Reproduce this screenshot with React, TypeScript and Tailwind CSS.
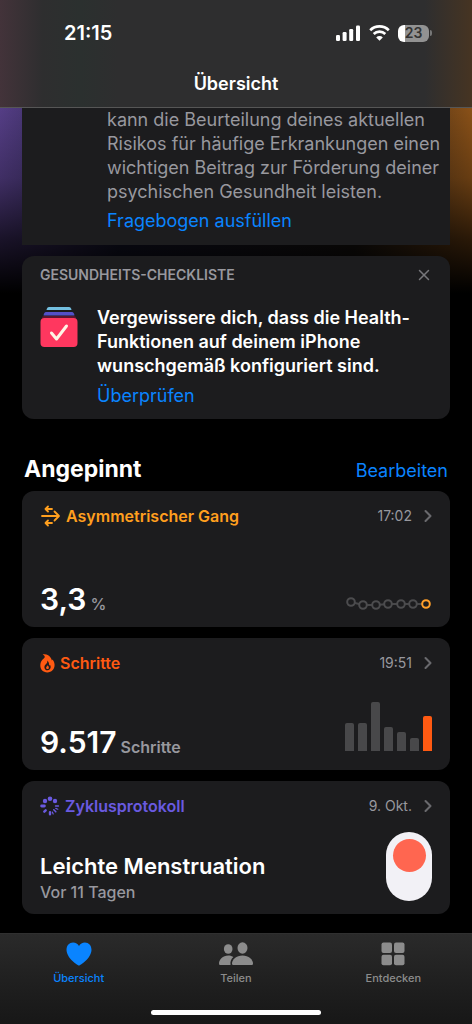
import React from "react";
import clsx from "clsx";
import { ChevronRight, X } from "lucide-react";

type Tab = {
  label: string;
  icon: React.ReactNode;
  active?: boolean;
};

/** Relative heights of the last seven days, in px */
const stepBars = [28, 28, 49, 24, 19, 13, 35];

/** Points of the gait trend line */
const gaitPoints = [
  [5, 7],
  [17, 10],
  [30, 10],
  [42, 9],
  [55, 9],
  [67, 9],
  [80, 9],
];

const SignalIcon = () => (
  <svg width="25" height="16" viewBox="0 0 25 16" fill="currentColor" aria-hidden="true">
    <rect x="0" y="10" width="4" height="6" rx="1.2" />
    <rect x="6.6" y="7" width="4" height="9" rx="1.2" />
    <rect x="13.2" y="4" width="4" height="12" rx="1.2" />
    <rect x="20" y="0.5" width="4" height="15.5" rx="1.2" />
  </svg>
);

const WifiIcon = () => (
  <svg width="21" height="16" viewBox="0 0 21 16" fill="none" stroke="currentColor" strokeWidth="2.7" aria-hidden="true">
    <path d="M1.200 5.200a13.400 13.400 0 0 1 18.600 0" />
    <path d="M4.700 9a8.400 8.400 0 0 1 11.600 0" />
    <path d="M10.500 15.800l-3.300-3.400a4.700 4.700 0 0 1 6.600 0z" fill="currentColor" stroke="none" />
  </svg>
);

const Battery = () => (
  <div className="flex items-center gap-px">
    <div className="flex h-[17px] w-[31px] items-center justify-center rounded-md bg-linear-to-r from-white from-24% to-[#929292] to-24% text-sm leading-none font-semibold text-[#333]">
      23
    </div>
    <div className="h-[6px] w-[2px] rounded-r-full bg-[#777]" />
  </div>
);

const ChecklistIcon = () => (
  <svg width="38" height="42" viewBox="0 0 38 42" fill="none" className="shrink-0" aria-hidden="true">
    <path d="M9 1h20q2 0 2.500 3h-25Q7 1 9 1z" fill="#73bfe0" />
    <path d="M6 6h26q2 0 2.500 3.500h-31Q4 6 6 6z" fill="#5450c8" />
    <rect x="2" y="10" width="34" height="4" rx="2" fill="#5c1630" />
    <rect x="0.5" y="12" width="37" height="29" rx="4" fill="#ff375f" />
    <path d="M11.500 27l5 6L26.500 20" stroke="#fff5e6" strokeWidth="3" strokeLinecap="round" strokeLinejoin="round" />
  </svg>
);

const GaitIcon = () => (
  <svg width="21" height="22" viewBox="0 0 21 22" fill="none" stroke="currentColor" strokeWidth="1.8" strokeLinecap="round" strokeLinejoin="round" aria-hidden="true">
    <path d="M2 11h16.500M14.500 6.500L19 11l-4.500 4.500" />
    <path d="M12 4H6M8 1.500L5.500 4 8 6.500" />
    <path d="M12 18H6M8 15.500L5.500 18 8 20.500" />
  </svg>
);

const FlameIcon = () => (
  <svg width="15" height="19" viewBox="0 0 15 19" fill="currentColor" fillRule="evenodd" aria-hidden="true">
    <path d="M2.600.6C5.500-.3 9.300 1 11 4.200c.5 1 .7 1.700.9 2.300.3-.3.500-.6.600-1 1.300 1.400 2.100 3.600 2.100 5.600 0 4.300-3.100 7.400-7.300 7.400C3.100 18.500.3 15.500.3 11.600c0-2.500.9-4.600 2.300-6 .9-.9 2-1.500 2.100-2.600.1-1-.8-1.900-2.100-2.400zM7.300 6.600c.2 1.700-.5 2.600-1.300 3.500-.8.800-1.600 1.700-1.600 3.100 0 1.900 1.400 3.100 3.100 3.100 1.800 0 3.200-1.300 3.200-3.200 0-.9-.3-1.700-.8-2.300-.2.400-.4.700-.8.900.1-2.100-.4-4-1.800-5.100z" />
    <path d="M7.600 11.200c.9.900 1.300 1.700 1.300 2.500 0 .8-.6 1.400-1.400 1.400s-1.400-.6-1.400-1.400c0-.9 1.100-1.400 1.500-2.500z" />
  </svg>
);

const CycleIcon = () => (
  <svg width="20" height="20" viewBox="0 0 20 20" fill="currentColor" stroke="currentColor" strokeLinecap="round" aria-hidden="true">
    <g stroke="none">
      <circle cx="10" cy="2.8" r="2.3" />
      <circle cx="15" cy="5" r="2.2" />
      <circle cx="5" cy="5" r="2.2" />
    </g>
    <path d="M1.600 10h2.800" strokeWidth="2.8" />
    <path d="M4.300 15.700l1.400-1.400M10 18.200v-2" strokeWidth="2.4" />
    <path d="M15.800 15.800l-2-2M18.400 10h-2.800" strokeWidth="1.6" />
    <path d="M13.200 18l-.9-2M17.800 13.200l-2-.8" strokeWidth="1.2" />
  </svg>
);

const HeartIcon = () => (
  <svg width="26" height="24" viewBox="0 0 26 24" fill="currentColor" aria-hidden="true">
    <path d="M13 23.500C11.800 23.500.5 16.200.5 7.700.5 3.600 3.300.5 7.100.5c2.600 0 4.700 1.300 5.900 3.500C14.200 1.800 16.300.5 18.900.5c3.800 0 6.600 3.100 6.600 7.200 0 8.500-11.300 15.800-12.500 15.800z" />
  </svg>
);

const PeopleIcon = () => (
  <svg width="34" height="24" viewBox="0 0 34 24" fill="currentColor" aria-hidden="true">
    <ellipse cx="9.2" cy="7" rx="4.3" ry="4.8" />
    <ellipse cx="23.5" cy="6" rx="5" ry="5.7" />
    <path d="M9.200 13.500c2.200 0 3.900.6 5.200 1.500-2.200 1.900-3.500 4.700-2.800 8H1.500C.6 23 0 22.600 0 21.500c0-3.800 3.900-8 9.200-8z" />
    <path d="M23.500 13.500c6.200 0 10.500 4.300 10.500 8 0 1.100-.6 1.500-1.700 1.500H14.700c-1.100 0-1.700-.4-1.700-1.500 0-3.700 4.300-8 10.500-8z" />
  </svg>
);

const GridIcon = () => (
  <svg width="24" height="24" viewBox="0 0 24 24" fill="currentColor" aria-hidden="true">
    <rect x="0.5" y="0.5" width="10.5" height="10.5" rx="2" />
    <rect x="13" y="0.5" width="10.5" height="10.5" rx="2" />
    <rect x="0.5" y="12.8" width="10.5" height="10.5" rx="2" />
    <rect x="13" y="12.8" width="10.5" height="10.5" rx="2" />
  </svg>
);

const tabs: Tab[] = [
  { label: "Übersicht", icon: <HeartIcon />, active: true },
  { label: "Teilen", icon: <PeopleIcon /> },
  { label: "Entdecken", icon: <GridIcon /> },
];

type PinnedCardProps = {
  icon: React.ReactNode;
  title: string;
  time: string;
  color: string;
  children: React.ReactNode;
};

const PinnedCard: React.FC<PinnedCardProps> = ({ icon, title, time, color, children }) => (
  <article className="rounded-xl bg-[#1c1c1e] px-[18px] pt-[14px] pb-[10px]">
    <div className="flex h-[22px] items-center justify-between">
      <h3 className={clsx("flex items-center gap-[5px] text-base font-semibold", color)}>
        {icon}
        {title}
      </h3>
      <button type="button" aria-label={`${title} öffnen`} className="-mr-[6px] flex items-center gap-[6px] text-sm text-[#98989e]">
        {time}
        <ChevronRight size={20} strokeWidth={2.5} className="text-[#69696d]" />
      </button>
    </div>
    {children}
  </article>
);

const GaitChart = () => (
  <svg width="86" height="18" viewBox="0 0 86 18" fill="#1c1c1e" strokeWidth="2" className="mb-1" aria-hidden="true">
    <polyline points={gaitPoints.map((p) => p.join(",")).join(" ")} fill="none" stroke="#48484a" />
    {gaitPoints.map(([x, y], index) => (
      <circle key={index} cx={x} cy={y} r="3.8" stroke={index === gaitPoints.length - 1 ? "#ff9f2a" : "#4c4c4e"} />
    ))}
  </svg>
);

const App: React.FC = () => {
  return (
    <div className="flex min-h-screen flex-col bg-black font-['Inter','Liberation_Sans',sans-serif] text-white">
      <header className="border-b border-[#565656] bg-[linear-gradient(to_right,#43333a,#2e2e2f_9%,#2b302f_17%,#2e2e2f_25%,#2e2e2f_90%,#463422)] pb-[10px]">
        <div className="flex h-[66px] items-center justify-between pr-10 pl-16">
          <span className="text-xl font-semibold">21:15</span>
          <div className="flex items-center gap-2">
            <SignalIcon />
            <WifiIcon />
            <Battery />
          </div>
        </div>
        <h1 className="pt-[5px] text-center text-lg leading-[26px] font-semibold">Übersicht</h1>
      </header>

      <main className="flex-1 bg-[linear-gradient(to_bottom,transparent,#00000040_70px,#000000b0_130px,#000_185px),linear-gradient(to_right,#553e86,#1b1b38_25%,#1e1916_75%,#8a5118)] px-[22px] pb-[18px]">
        <section className="bg-[#1c1c1e] pr-2 pb-3 pl-[85px] text-lg leading-6">
          <p className="text-[#98989e]">
            kann die Beurteilung deines aktuellen
            <br />
            Risikos für häufige Erkrankungen einen
            <br />
            wichtigen Beitrag zur Förderung deiner
            <br />
            psychischen Gesundheit leisten.
          </p>
          <a href="#fragebogen" className="mt-[5px] block text-[#0a84ff]">
            Fragebogen ausfüllen
          </a>
        </section>

        <section className="mt-[11px] rounded-xl bg-[#1c1c1e] px-[18px] pt-[9px] pb-[11px]">
          <div className="flex items-center justify-between text-[#98989e]">
            <h2 className="text-sm leading-5 font-semibold">GESUNDHEITS-CHECKLISTE</h2>
            <button type="button" aria-label="Schließen" className="-mr-px text-[#77777b]">
              <X size={18} strokeWidth={2} />
            </button>
          </div>
          <div className="mt-[21px] flex gap-[19px] text-lg leading-6">
            <ChecklistIcon />
            <div>
              <p className="font-semibold">
                Vergewissere dich, dass die Health-
                <br />
                Funktionen auf deinem iPhone
                <br />
                wunschgemäß konfiguriert sind.
              </p>
              <a href="#pruefen" className="mt-[6px] block text-[#0a84ff]">
                Überprüfen
              </a>
            </div>
          </div>
        </section>

        <div className="mt-9 flex items-end justify-between px-[2px]">
          <h2 className="text-[23px] leading-7 font-bold">Angepinnt</h2>
          <button type="button" className="text-lg leading-6 text-[#0a84ff]">
            Bearbeiten
          </button>
        </div>

        <div className="mt-2 flex flex-col gap-[11px]">
          <PinnedCard icon={<GaitIcon />} title="Asymmetrischer Gang" time="17:02" color="text-[#ff9f1e]">
            <div className="mt-[54px] flex items-end justify-between">
              <p className="flex items-baseline gap-1 text-3xl leading-9 font-semibold">
                3,3
                <span className="text-base font-medium text-[#98989e]">%</span>
              </p>
              <GaitChart />
            </div>
          </PinnedCard>

          <PinnedCard icon={<FlameIcon />} title="Schritte" time="19:51" color="text-[#ff5a12]">
            <div className="mt-7 flex items-end justify-between">
              <p className="flex items-baseline gap-1 text-3xl leading-9 font-semibold">
                9.517
                <span className="text-base font-semibold text-[#98989e]">Schritte</span>
              </p>
              <div className="mb-[9px] flex items-end gap-1">
                {stepBars.map((height, index) => (
                  <div
                    key={index}
                    className={clsx("w-[9px] rounded-t-xs", index === stepBars.length - 1 ? "bg-[#ff5a12]" : "bg-[#48484a]")}
                    style={{ height }}
                  />
                ))}
              </div>
            </div>
          </PinnedCard>

          <PinnedCard icon={<CycleIcon />} title="Zyklusprotokoll" time="9. Okt." color="text-[#6a5ae0]">
            <div className="mt-[15px] flex items-end justify-between">
              <div>
                <p className="text-[22px] leading-7 font-semibold">Leichte Menstruation</p>
                <p className="text-base leading-6 font-medium text-[#98989e]">Vor 11 Tagen</p>
              </div>
              <div className="mb-[3px] flex h-[69px] w-[46px] justify-center rounded-full bg-[#f2f1f6] pt-[7px]">
                <div className="size-[33px] rounded-full bg-[#ff6650]" />
              </div>
            </div>
          </PinnedCard>
        </div>
      </main>

      <footer className="border-t border-[#303030] bg-linear-to-b from-[#2a2a2a] to-[#171717] pb-[9px]">
        <nav className="flex justify-around">
          {tabs.map((tab) => (
            <button
              key={tab.label}
              type="button"
              className={clsx(
                "flex w-1/3 flex-col items-center gap-1 pt-2 text-[11px] leading-4 font-medium",
                tab.active ? "text-[#0a84ff]" : "text-[#8c8c8c]",
              )}
            >
              {tab.icon}
              {tab.label}
            </button>
          ))}
        </nav>
        <div className="mx-auto mt-6 h-[5px] w-[36%] rounded-full bg-white" />
      </footer>
    </div>
  );
};

export default App;
